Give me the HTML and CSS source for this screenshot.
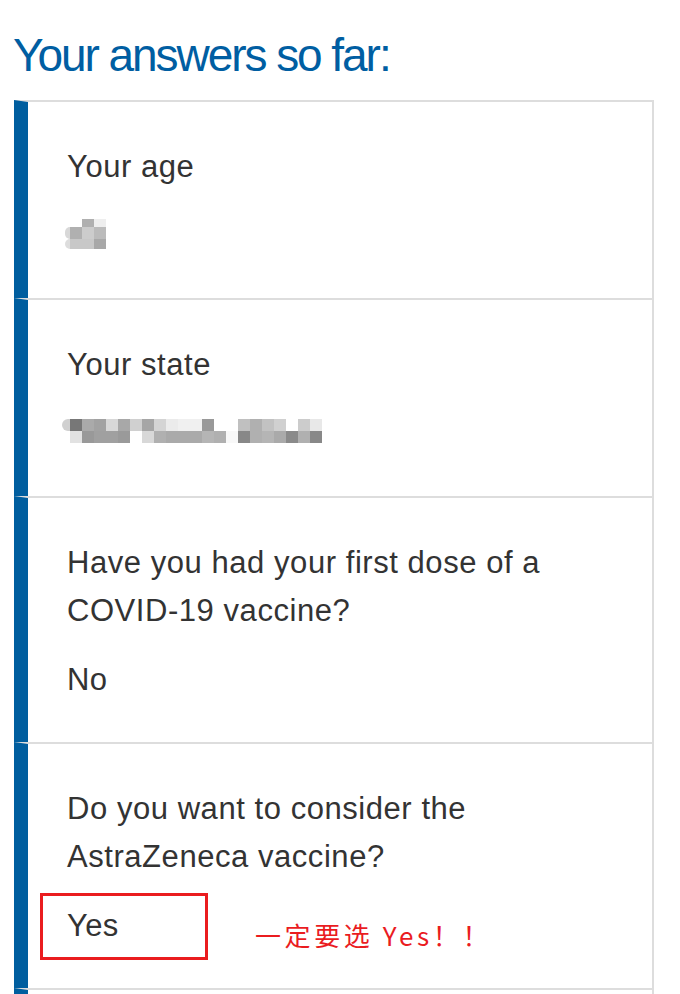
FILE: index.html
```html
<!DOCTYPE html>
<html lang="en">
<head>
<meta charset="utf-8">
<title>Your answers so far</title>
<link rel="stylesheet" href="styles.css">
</head>
<body>
<h1 class="title">Your answers so far:</h1>
<div class="answers">
  <div class="row">
    <div class="label">Your age</div>
    <div class="value">
      <div class="mosaic mosaic-age">
        <span class="gw"></span><span class="gw"></span><span class="gb0"></span><span class="gee"></span>
        <span class="gd8 edge"></span><span class="gb0"></span><span class="gcc"></span><span class="gbb"></span>
        <span class="gdd edge"></span><span class="gc8"></span><span class="gc8"></span><span class="ga8"></span>
      </div>
    </div>
  </div>
  <div class="row">
    <div class="label">Your state</div>
    <div class="value">
      <div class="mosaic mosaic-state">
        <span class="gd0 edge"></span><span class="g77"></span><span class="gaa"></span><span class="ga2"></span><span class="gd8"></span><span class="ga8"></span><span class="gd0"></span><span class="ga6"></span><span class="gd4"></span><span class="geb"></span><span class="gf0"></span><span class="gf0"></span><span class="g99"></span><span class="gw"></span><span class="gw"></span><span class="gc0"></span><span class="gb0"></span><span class="gc2"></span><span class="gd0"></span><span class="gw"></span><span class="gcc"></span><span class="ge8"></span>
        <span class="gw"></span><span class="ge2"></span><span class="g99"></span><span class="ga0"></span><span class="ga0"></span><span class="g9a"></span><span class="gw"></span><span class="gd8"></span><span class="gb0"></span><span class="gaa"></span><span class="gaa"></span><span class="gaa"></span><span class="gb5"></span><span class="gb0"></span><span class="gf8"></span><span class="g88"></span><span class="gb0"></span><span class="gb5"></span><span class="gaa"></span><span class="g8a"></span><span class="gb0"></span><span class="g88"></span>
      </div>
    </div>
  </div>
  <div class="row">
    <div class="label">Have you had your first dose of a COVID-19 vaccine?</div>
    <div class="value">No</div>
  </div>
  <div class="row">
    <div class="label">Do you want to consider the AstraZeneca vaccine?</div>
    <div class="value highlighted">Yes
      <span class="mark-box"></span>
      <span class="mark-note">一定要选 Yes！！</span>
    </div>
  </div>
  <div class="row">
    <div class="label">&nbsp;</div>
  </div>
</div>
</body>
</html>
```
FILE: styles.css
```css
html, body {
  margin: 0;
  padding: 0;
  background: #ffffff;
  overflow: hidden;
}

body {
  font-family: "Liberation Sans", Arial, sans-serif;
  color: #333333;
}

.title {
  margin: 32px 0 22px 13px;
  font-size: 46px;
  line-height: 46px;
  font-weight: normal;
  letter-spacing: -2.05px;
  color: #005ea2;
}

.answers {
  margin-left: 14px;
  width: 640px;
}

.row {
  border-left: 14px solid #005e9f;
  border-top: 2px solid #dddddd;
  border-right: 2px solid #dddddd;
  padding: 41px 40px 38px 39px;
}

.label {
  font-size: 31px;
  line-height: 48px;
  letter-spacing: 0.55px;
}

.value {
  margin-top: 21px;
  font-size: 31px;
  line-height: 48px;
  height: 48px;
  letter-spacing: 0.4px;
}

.highlighted {
  position: relative;
}

.mark-box {
  position: absolute;
  left: -27px;
  top: -9px;
  width: 162px;
  height: 61px;
  border: 3px solid #ea1c1f;
}

.mark-note {
  position: absolute;
  left: 188px;
  top: 20px;
  font-family: "Noto Sans CJK SC", sans-serif;
  font-size: 26px;
  line-height: 26px;
  color: #ea1c1f;
  white-space: nowrap;
  letter-spacing: 3.6px;
}

.mosaic {
  display: grid;
}

.mosaic-age {
  padding-top: 7px;
  margin-left: -2px;
  grid-template-columns: 5px repeat(3, 12px);
  grid-template-rows: 8px 12px 10px;
}

.mosaic-state {
  padding-top: 9px;
  margin-left: -5px;
  grid-template-columns: 8px repeat(21, 12px);
  grid-template-rows: 12px 12px;
}

.edge { border-radius: 6px 0 0 6px; }

.gw { background: transparent; }
.g77 { background: #777777; }
.g88 { background: #888888; }
.g8a { background: #8a8a8a; }
.g99 { background: #999999; }
.g9a { background: #9a9a9a; }
.ga0 { background: #a0a0a0; }
.ga2 { background: #a2a2a2; }
.ga6 { background: #a6a6a6; }
.ga8 { background: #a8a8a8; }
.gaa { background: #aaaaaa; }
.gb0 { background: #b0b0b0; }
.gb5 { background: #b5b5b5; }
.gbb { background: #bbbbbb; }
.gc0 { background: #c0c0c0; }
.gc2 { background: #c2c2c2; }
.gc8 { background: #c8c8c8; }
.gcc { background: #cccccc; }
.gd0 { background: #d0d0d0; }
.gd4 { background: #d4d4d4; }
.gd8 { background: #d8d8d8; }
.gdd { background: #dddddd; }
.ge2 { background: #e2e2e2; }
.ge8 { background: #e8e8e8; }
.geb { background: #ebebeb; }
.gee { background: #eeeeee; }
.gf0 { background: #f0f0f0; }
.gf8 { background: #f8f8f8; }
```
